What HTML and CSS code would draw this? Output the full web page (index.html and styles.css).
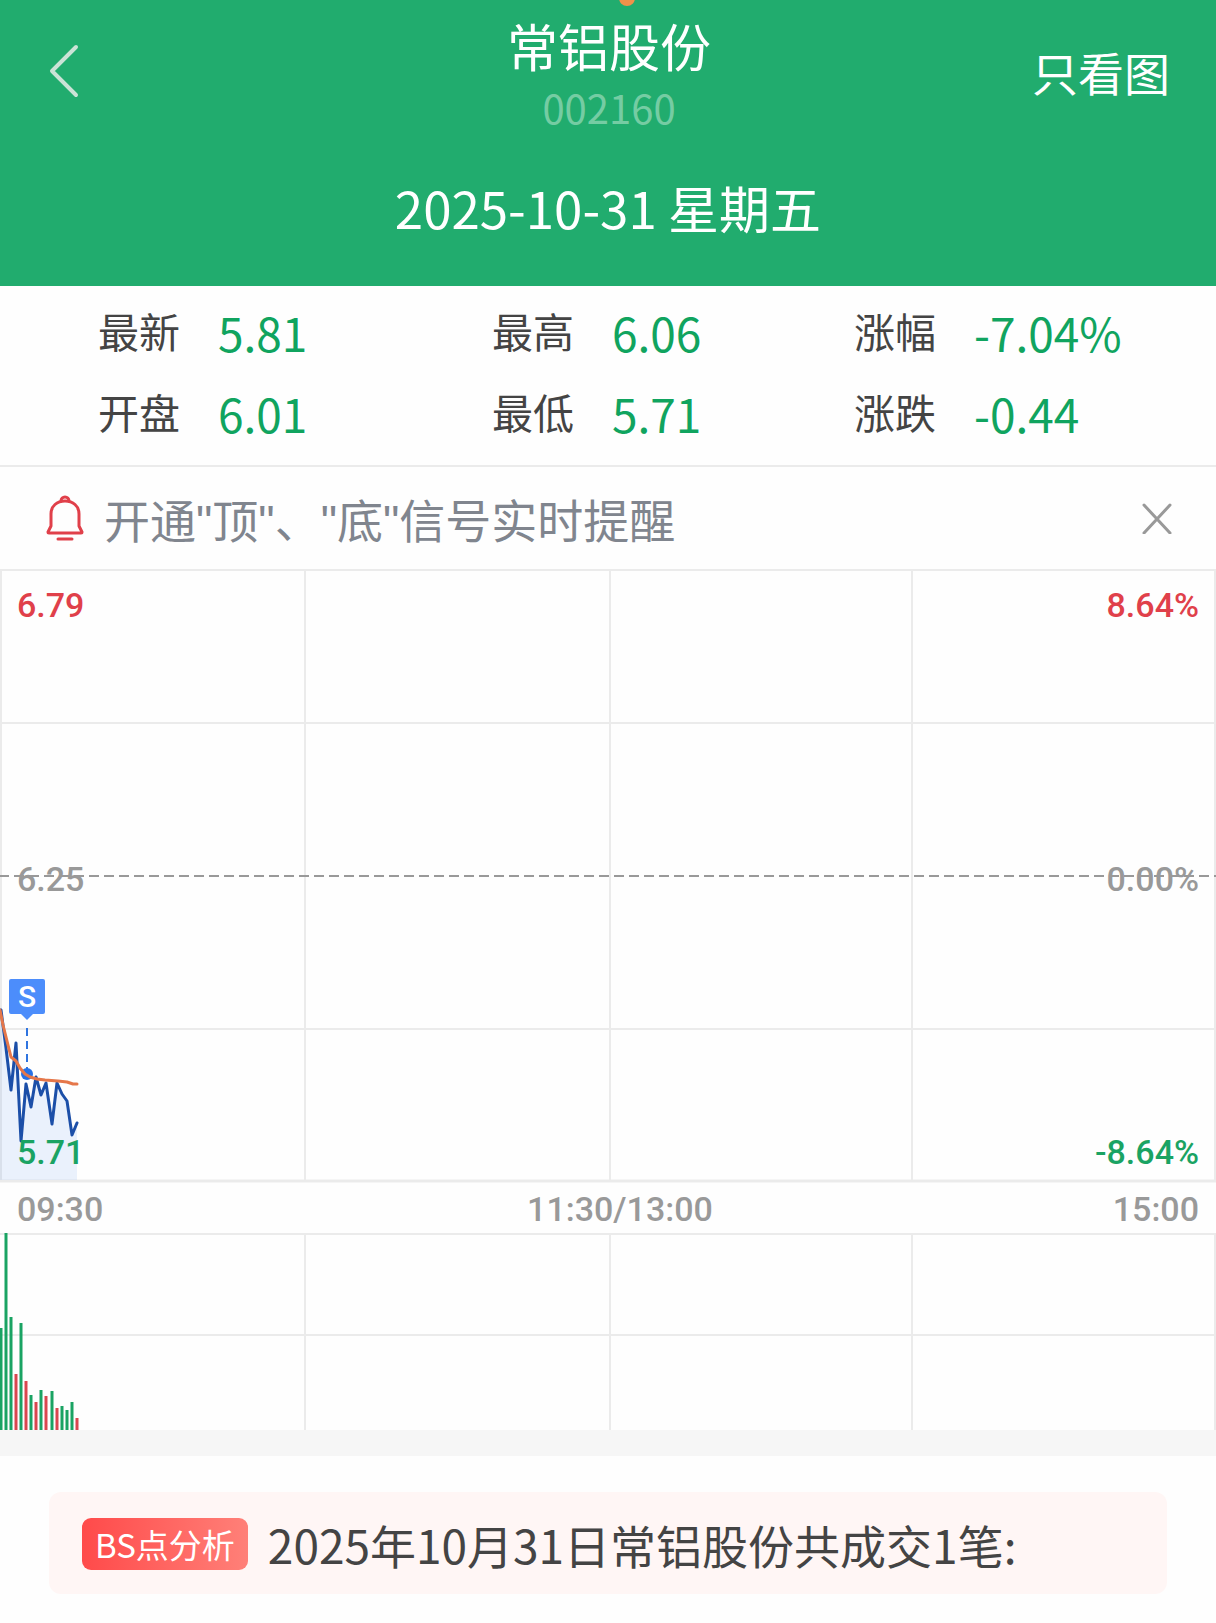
FILE: index.html
```html
<!DOCTYPE html>
<html lang="zh-CN">
<head>
    <meta charset="UTF-8">
    <meta name="viewport" content="width=device-width, initial-scale=1">
    <title>常铝股份 002160</title>
    <link rel="stylesheet" href="styles.css">
</head>
<body>
    <header class="header">
        <span class="header-dot"></span>
        <div class="nav">
            <button class="back" type="button" aria-label="返回">
                <svg width="32" height="56" viewBox="0 0 32 56" fill="none" stroke="#cbe3d6" stroke-width="4" stroke-linecap="round" stroke-linejoin="round">
                    <path d="M28 4 4 28l24 24"/>
                </svg>
            </button>
            <div class="stock">
                <h1 class="stock-name">常铝股份</h1>
                <div class="stock-code">002160</div>
            </div>
            <a class="chart-only" href="#chart">只看图</a>
        </div>
        <div class="date">2025-10-31 星期五</div>
    </header>

    <dl class="quotes">
        <div class="quote"><dt>最新</dt><dd>5.81</dd></div>
        <div class="quote"><dt>最高</dt><dd>6.06</dd></div>
        <div class="quote"><dt>涨幅</dt><dd>-7.04%</dd></div>
        <div class="quote"><dt>开盘</dt><dd>6.01</dd></div>
        <div class="quote"><dt>最低</dt><dd>5.71</dd></div>
        <div class="quote"><dt>涨跌</dt><dd>-0.44</dd></div>
    </dl>

    <div class="notice">
        <svg class="bell" width="38" height="46" viewBox="0 0 38 46" fill="none" stroke="#e0404a" stroke-width="3" stroke-linecap="round" stroke-linejoin="round">
            <path d="M15 6a4 4 0 0 1 8 0"/>
            <path d="M5 31V19C5 11 11 6 19 6s14 5 14 13v12l3 6q0 1-1 1H3q-1 0-1-1z"/>
            <path d="M12 44h14"/>
        </svg>
        <span class="notice-text">开通"顶"、"底"信号实时提醒</span>
        <button class="close" type="button" aria-label="关闭">
            <svg width="32" height="32" viewBox="0 0 32 32" stroke="#999" stroke-width="3" stroke-linecap="round">
                <path d="M3 3l26 28M29 3 3 31"/>
            </svg>
        </button>
    </div>

    <!-- 分时图 -->
    <div class="price-chart" id="chart">
        <svg viewBox="0 0 1216 614">
            <g stroke="#ebebeb" stroke-width="2">
                <path d="M0 1h1216M0 154h1216M0 460h1216"/>
                <path d="M1 0v612M305 0v612M610 0v612M912 0v612M1215 0v612"/>
                <path d="M0 612h1216" stroke-width="3"/>
            </g>
            <path fill="#3b7df0" fill-opacity=".1" d="M0 438 6 479 11 521 16 474 21 572 26 515 31 538 36 508 41 526 46 514 52 555 57 514 62 525 67 532 72 566 77 554V611H0z"/>
            <polyline fill="none" stroke="#1c4fa8" stroke-width="3" stroke-linejoin="round" stroke-linecap="round" points="1,441 6,479 11,521 16,474 21,572 26,515 31,538 36,508 41,526 46,514 52,555 57,514 62,525 67,532 72,566 77,554"/>
            <!-- 卖出点 -->
            <path d="M27 459v41" stroke="#2f74e0" stroke-width="2" stroke-dasharray="8 5"/>
            <circle cx="27" cy="505" r="6" fill="#2671e6"/>
            <polyline fill="none" stroke="#e5774a" stroke-width="3" stroke-linejoin="round" stroke-linecap="round" points="0,441 3,456 7,472 11,488 16,492 20,499 25,505 30,508 37,510 45,511 58,512 67,513 73,515 77,515"/>
            <path fill="#4c8dfb" d="M11 410h32q2 0 2 2v31q0 2-2 2H33l-6 6-6-6H11q-2 0-2-2v-31q0-2 2-2z"/>
            <text class="marker" x="27" y="438" text-anchor="middle">S</text>
        </svg>
        <div class="scale scale-left">
            <span class="up">6.79</span>
            <span>6.25</span>
            <span class="down">5.71</span>
        </div>
        <div class="scale scale-right">
            <span class="up">8.64%</span>
            <span>0.00%</span>
            <span class="down">-8.64%</span>
        </div>
        <svg class="baseline" viewBox="0 0 1216 614">
            <path d="M-1 307h1217" stroke="#999" stroke-width="2" stroke-dasharray="10 5"/>
        </svg>
    </div>

    <div class="times">
        <span>09:30</span>
        <span class="time-mid">11:30/13:00</span>
        <span class="time-end">15:00</span>
    </div>

    <!-- 成交量 -->
    <svg class="volume-chart" viewBox="0 0 1216 197">
        <g stroke="#ebebeb" stroke-width="2">
            <path d="M0 1h1216M0 102h1216"/>
            <path d="M305 0v197M610 0v197M912 0v197M1215 0v197"/>
        </g>
        <g fill="none" stroke-width="3">
            <path stroke="#1aa363" d="M1 197V95M6 197V0M11 197V84M21 197V90M31 197V162M41 197V157M52 197V158M62 197V173M67 197V177M72 197V169"/>
            <path stroke="#d9474f" d="M16 197V141M26 197V148M36 197V169M46 197V163M57 197V175M77 197V185"/>
        </g>
    </svg>

    <section class="analysis">
        <div class="analysis-card">
            <span class="tag">BS点分析</span>
            <span class="analysis-text">2025年10月31日常铝股份共成交1笔:</span>
        </div>
    </section>
</body>
</html>
```
FILE: styles.css
```css
* {
    box-sizing: border-box;
}

body {
    margin: 0;
    background: #fefefe;
    color: #444;
    font-family: "Noto Sans CJK SC", sans-serif;
}

button {
    padding: 0;
    border: 0;
    background: none;
    cursor: pointer;
}

svg {
    display: block;
}

/* 顶部 */
.header {
    position: relative;
    overflow: hidden;
    padding-bottom: 14px;
    background: #21ac6e;
    color: #fff;
    text-align: center;
}

.header-dot {
    position: absolute;
    top: -10px;
    left: 50%;
    width: 16px;
    height: 16px;
    margin-left: 11px;
    border-radius: 50%;
    background: #f0914a;
}

.nav {
    display: grid;
    grid-template-columns: 1fr auto 1fr;
    align-items: center;
    height: 142px;
    padding: 0 46px 0 48px;
}

.back {
    justify-self: start;
}

.stock {
    padding-top: 8px;
}

.stock-name {
    margin: 0;
    font-size: 51px;
    font-weight: 400;
    line-height: 64px;
}

.stock-code {
    color: #75cca3;
    font-size: 40px;
    line-height: 60px;
}

.chart-only {
    justify-self: end;
    color: #fff;
    font-size: 46px;
    text-decoration: none;
}

.date {
    font-size: 51px;
    line-height: 130px;
}

/* 行情数据 */
.quotes {
    display: grid;
    grid-template-columns: 394fr 362fr 362fr;
    margin: 0;
    padding: 5px 0 12px 98px;
    border-bottom: 2px solid #ebebeb;
}

.quote {
    display: flex;
    align-items: center;
    gap: 38px;
    height: 81px;
}

.quote dt {
    padding-bottom: 4px;
    font-size: 41px;
}

.quote dd {
    margin: 0;
    color: #10a45f;
    font-size: 46px;
}

/* 提醒条 */
.notice {
    display: flex;
    align-items: center;
    height: 102px;
    padding: 0 43px 0 46px;
}

.notice-text {
    flex: 1;
    margin-left: 20px;
    color: #80858e;
    font-family: "Liberation Sans", "Noto Sans CJK SC", sans-serif;
    font-size: 46px;
}

/* 图表 */
.price-chart {
    position: relative;
}

.marker {
    fill: #fff;
    font-family: Roboto, sans-serif;
    font-size: 30px;
    font-weight: 500;
}

.scale {
    position: absolute;
    top: 0;
    bottom: 0;
    display: flex;
    flex-direction: column;
    justify-content: space-between;
    padding: 16px 17px 11px;
    color: #999;
    font: 500 34px/40px Roboto, sans-serif;
}

.scale-left {
    left: 0;
}

.scale-right {
    right: 0;
    text-align: right;
}

.up {
    color: #e0404a;
}

.down {
    color: #1aa363;
}

.baseline {
    position: absolute;
    top: 0;
    left: 0;
    width: 100%;
}

.times {
    display: grid;
    grid-template-columns: 1fr auto 1fr;
    padding: 2px 17px 0;
    color: #999;
    font: 500 34px/48px Roboto, sans-serif;
}

.time-mid {
    margin-left: 24px;
}

.time-end {
    text-align: right;
}

/* BS点分析 */
.analysis {
    padding: 36px 49px 29px;
    border-top: 26px solid #f6f6f6;
}

.analysis-card {
    display: flex;
    align-items: center;
    gap: 20px;
    height: 102px;
    padding: 2px 33px 0;
    border-radius: 12px;
    background: #fff6f5;
}

.tag {
    padding: 0 13px;
    border-radius: 9px;
    background: linear-gradient(90deg, #ff4a4a, #ff8078);
    color: #fff;
    font-size: 33px;
    line-height: 52px;
}

.analysis-text {
    font-size: 46px;
    line-height: 64px;
}
```
